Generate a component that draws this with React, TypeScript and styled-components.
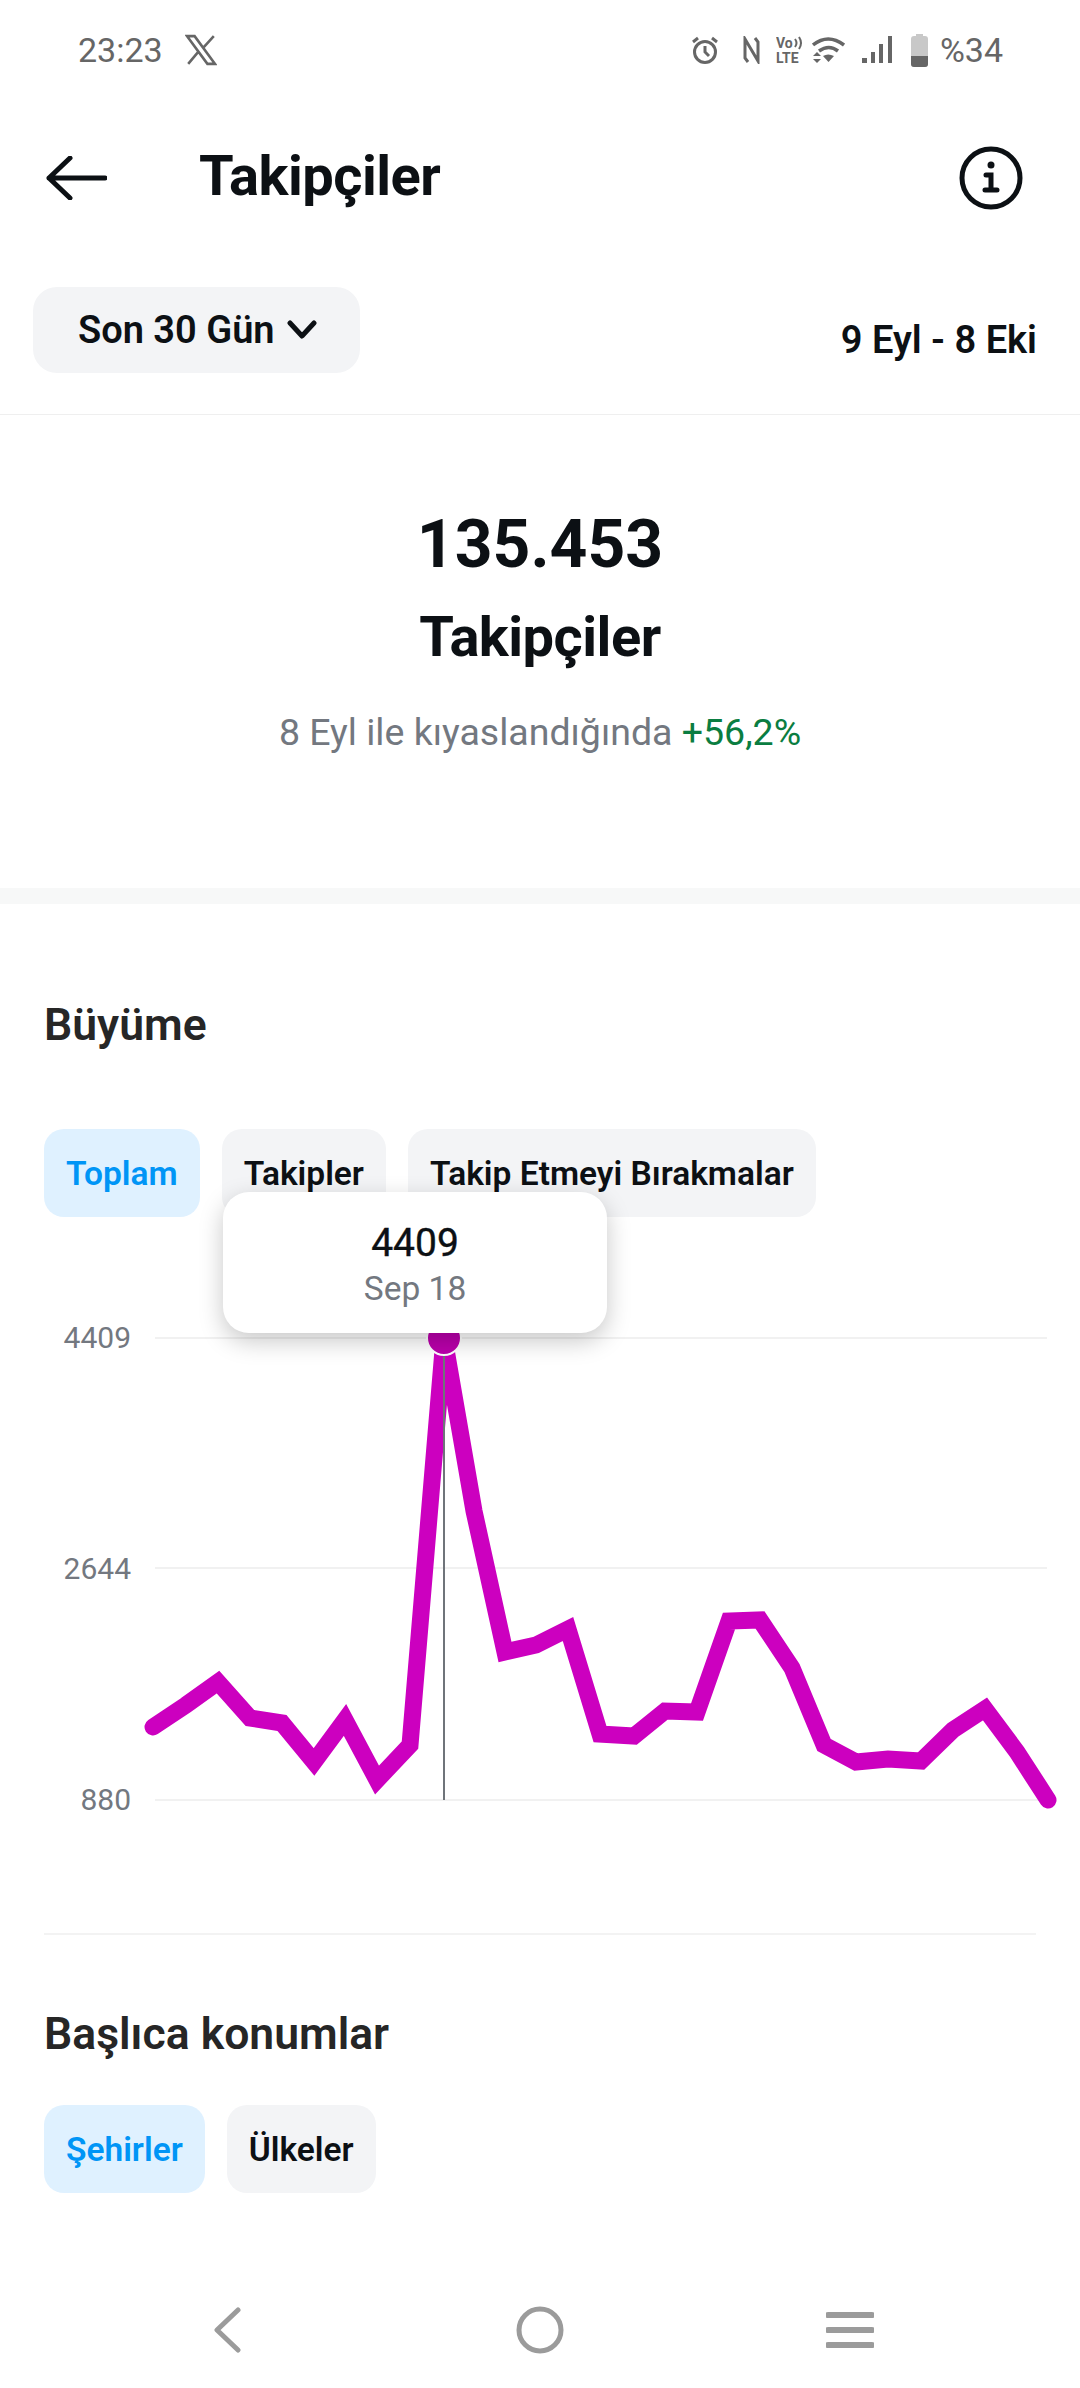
import React from 'react';
import styled, { createGlobalStyle } from 'styled-components';

const GlobalStyle = createGlobalStyle`
  html, body {
    margin: 0;
    padding: 0;
    background: #fff;
    font-family: Roboto, "Noto Sans", sans-serif;
  }
`;

const Page = styled.div`
  width: 1080px;
  height: 2388px;
  display: flex;
  flex-direction: column;
  overflow: hidden;
  background: #fff;
  color: #0c1014;
`;

const StatusBar = styled.div`
  height: 100px;
  padding: 0 77px 0 78px;
  box-sizing: border-box;
  display: flex;
  align-items: center;
  color: #666;
  font-size: 34px;
`;

const StatusIcon = styled.svg<{ $ml?: number }>`
  display: block;
  flex: none;
  margin-left: ${p => p.$ml ?? 0}px;
`;

const StatusSpacer = styled.div`
  flex: 1;
`;

const BatteryText = styled.span`
  margin-left: 12px;
`;

const Header = styled.header`
  height: 156px;
  padding: 0 57px 0 46px;
  display: flex;
  align-items: center;
  box-sizing: border-box;
`;

const PageTitle = styled.h1`
  margin: 0 0 4px 92px;
  flex: 1;
  font-size: 56px;
  font-weight: 700;
  letter-spacing: -0.5px;
`;

const FilterRow = styled.div`
  padding: 31px 43px 41px 33px;
  display: flex;
  justify-content: space-between;
  align-items: flex-start;
  border-bottom: 1px solid #efefef;
`;

const RangeButton = styled.div`
  width: 327px;
  height: 86px;
  padding-left: 45px;
  box-sizing: border-box;
  display: flex;
  align-items: center;
  gap: 12px;
  border-radius: 24px;
  background: #f3f4f6;
  font-size: 38px;
  font-weight: 600;
`;

const DateRange = styled.div`
  margin-top: 30px;
  font-size: 38px;
  font-weight: 600;
  line-height: 46px;
`;

const Summary = styled.section`
  height: 473px;
  padding-top: 98px;
  box-sizing: border-box;
  display: flex;
  flex-direction: column;
  align-items: center;
`;

const BigNumber = styled.div`
  font-size: 66px;
  font-weight: 700;
  line-height: 64px;
`;

const SummaryLabel = styled.div`
  margin-top: 28px;
  font-size: 56px;
  font-weight: 700;
  line-height: 64px;
  letter-spacing: -0.5px;
`;

const Compare = styled.div`
  margin-top: 41px;
  font-size: 37.5px;
  line-height: 44px;
  color: #737880;
`;

const Growth = styled.span`
  color: #0a7d41;
`;

const ThickDivider = styled.div`
  height: 16px;
  background: #f7f8f8;
`;

const Section = styled.section`
  padding: 0 44px;
`;

const SectionTitle = styled.h2<{ $top: number }>`
  margin: ${p => p.$top}px 0 0;
  font-size: 44.5px;
  font-weight: 600;
  line-height: 52px;
  color: #262626;
`;

const Pills = styled.div<{ $top: number }>`
  margin-top: ${p => p.$top}px;
  display: flex;
  gap: 22px;
`;

const Pill = styled.div<{ $active?: boolean }>`
  height: 88px;
  padding: 0 22px;
  display: flex;
  align-items: center;
  border-radius: 20px;
  font-size: 33.5px;
  font-weight: 600;
  background: ${p => (p.$active ? '#dff1ff' : '#f3f4f6')};
  color: ${p => (p.$active ? '#0095f6' : '#0c1014')};
`;

const Chart = styled.div`
  position: relative;
  margin: 103px 0 0;
  display: grid;
  grid-template-columns: 155px 925px;
  height: 500px;
`;

const YAxis = styled.div`
  padding: 1px 24px 3px 0;
  box-sizing: border-box;
  display: flex;
  flex-direction: column;
  justify-content: space-between;
  align-items: flex-end;
  font-size: 30px;
  line-height: 34px;
  color: #737880;
`;

const Plot = styled.svg`
  display: block;
  overflow: visible;
`;

const Tooltip = styled.div`
  position: absolute;
  left: 223px;
  top: -128px;
  width: 384px;
  height: 141px;
  box-sizing: border-box;
  padding-top: 28px;
  display: flex;
  flex-direction: column;
  align-items: center;
  border-radius: 26px;
  background: #fff;
  box-shadow: 0 8px 24px rgba(0, 0, 0, 0.22);
`;

const TooltipValue = styled.div`
  font-size: 39px;
  line-height: 46px;
  font-weight: 400;
  -webkit-text-stroke: 0.4px #0c1014;
`;

const TooltipDate = styled.div`
  margin-top: 1px;
  font-size: 33.5px;
  line-height: 44px;
  color: #737880;
`;

const ThinDivider = styled.div`
  margin: 113px 44px 0;
  height: 2px;
  background: #f3f3f3;
`;

const NavBar = styled.nav`
  margin-top: auto;
  height: 116px;
  padding: 0 0 0 212px;
  display: flex;
  align-items: center;
  box-sizing: border-box;
`;

const NavIcon = styled.svg<{ $ml?: number }>`
  display: block;
  margin-left: ${p => p.$ml ?? 0}px;
  stroke: #9b9b9b;
  fill: none;
`;

const points: [number, number][] = [
  [153, 1727], [186, 1705], [218, 1682], [250, 1718], [282, 1723], [314, 1762], [345, 1720], [377, 1780],
  [410, 1745], [444, 1338], [474, 1511], [505, 1652], [536, 1645], [568, 1629], [600, 1734], [634, 1736],
  [665, 1711], [697, 1712], [729, 1621], [760, 1620], [792, 1668], [824, 1745], [856, 1762], [888, 1759],
  [921, 1761], [953, 1730], [985, 1709], [1017, 1752], [1048, 1800],
];

const gridLines = [1338, 1568, 1800];

function App() {
  return (
    <Page>
      <GlobalStyle />
      <StatusBar>
        <span>23:23</span>
        <StatusIcon $ml={22} width="32" height="32" viewBox="0 0 30 30" fill="none" stroke="#666" strokeWidth="2.4">
          <path d="M2 2h7l19 26h-7zM27 2L17 13M3 28l10-12" />
        </StatusIcon>
        <StatusSpacer />
        <StatusIcon width="28" height="28" viewBox="0 0 28 28" fill="none" stroke="#666" strokeWidth="3">
          <circle cx="14" cy="16" r="10.5" />
          <path d="M14 10v6l4 4M2 6l5-4M26 6l-5-4" />
        </StatusIcon>
        <StatusIcon $ml={24} width="17" height="28" viewBox="0 0 17 28" fill="none" stroke="#666" strokeWidth="3">
          <path d="M5 26L2 22V3L15 25V6L12 2" />
        </StatusIcon>
        <StatusIcon $ml={16} width="27" height="36" viewBox="0 -4 27 36">
          <text x="0" y="12" fontSize="14" fontWeight="700" fontFamily="Roboto" fill="#666">Vo</text>
          <path d="M19 3q3 4 0 8M23 1q4 6 0 12" fill="none" stroke="#666" strokeWidth="2" />
          <text x="0" y="27" fontSize="14" fontWeight="700" fontFamily="Roboto" fill="#666">LTE</text>
        </StatusIcon>
        <StatusIcon $ml={9} width="33" height="28" viewBox="0 0 33 28" fill="none" stroke="#666" strokeWidth="3.5">
          <path d="M1 9q15-12 31 0M7 15q10-7 19 0" />
          <path d="M11 20q5-3 11 0l-5.500 6z" fill="#666" stroke="none" />
          <path d="M1 20l4-4 4 4zM1 23h8l-4 4z" fill="#666" stroke="none" />
        </StatusIcon>
        <StatusIcon $ml={17} width="31" height="28" viewBox="0 0 31 28" fill="#666">
          <rect x="0" y="22" width="5" height="5" />
          <rect x="9" y="16" width="4" height="11" />
          <rect x="17" y="8" width="4" height="19" />
          <rect x="26" y="0" width="4" height="27" />
        </StatusIcon>
        <StatusIcon $ml={18} width="17" height="33" viewBox="0 0 17 33">
          <path d="M5 0h7v2h2q3 0 3 3v25q0 3-3 3H3q-3 0-3-3V5q0-3 3-3h2z" fill="#c8c8c8" />
          <path d="M0 22h17v8q0 3-3 3H3q-3 0-3-3z" fill="#666" />
        </StatusIcon>
        <BatteryText>%34</BatteryText>
      </StatusBar>

      <Header>
        <svg width="61" height="44" viewBox="0 0 61 44" fill="none" stroke="#0c1014" strokeWidth="5" strokeLinecap="round" strokeLinejoin="round">
          <path d="M3 22h56M24 2L3 22l21 20" />
        </svg>
        <PageTitle>Takipçiler</PageTitle>
        <svg width="64" height="64" viewBox="0 0 64 64" fill="none" stroke="#0c1014" strokeWidth="5" strokeLinecap="round">
          <circle cx="32" cy="32" r="29" />
          <path d="M27 29h5v15M26 44h12" strokeWidth="5" />
          <circle cx="32" cy="19" r="3.500" fill="#0c1014" stroke="none" />
        </svg>
      </Header>

      <FilterRow>
        <RangeButton>
          Son 30 Gün
          <svg width="30" height="20" viewBox="0 0 30 20" fill="none" stroke="#0c1014" strokeWidth="5" strokeLinecap="round" strokeLinejoin="round">
            <path d="M3 3l12 13L27 3" />
          </svg>
        </RangeButton>
        <DateRange>9 Eyl - 8 Eki</DateRange>
      </FilterRow>

      <Summary>
        <BigNumber>135.453</BigNumber>
        <SummaryLabel>Takipçiler</SummaryLabel>
        <Compare>
          8 Eyl ile kıyaslandığında <Growth>+56,2%</Growth>
        </Compare>
      </Summary>

      <ThickDivider />

      <Section>
        <SectionTitle $top={95}>Büyüme</SectionTitle>
        <Pills $top={78}>
          <Pill $active>Toplam</Pill>
          <Pill>Takipler</Pill>
          <Pill>Takip Etmeyi Bırakmalar</Pill>
        </Pills>
      </Section>

      <Chart>
        <YAxis>
          <span>4409</span>
          <span>2644</span>
          <span>880</span>
        </YAxis>
        <Plot width="925" height="500" viewBox="155 1320 925 500">
          {gridLines.map(y => (
            <line key={y} x1="155" x2="1047" y1={y} y2={y} stroke="#f1f1f1" strokeWidth="2" />
          ))}
          <polyline
            points={points.map(p => p.join(',')).join(' ')}
            fill="none"
            stroke="#cc00bf"
            strokeWidth="17"
            strokeLinejoin="miter"
            strokeMiterlimit="8"
            strokeLinecap="round"
          />
          <line x1="444" x2="444" y1="1338" y2="1800" stroke="#6f747a" strokeWidth="2" />
          <circle cx="444" cy="1338" r="17" fill="#bb00ac" stroke="#fff" strokeWidth="2" />
        </Plot>
        <Tooltip>
          <TooltipValue>4409</TooltipValue>
          <TooltipDate>Sep 18</TooltipDate>
        </Tooltip>
      </Chart>

      <ThinDivider />

      <Section>
        <SectionTitle $top={73}>Başlıca konumlar</SectionTitle>
        <Pills $top={45}>
          <Pill $active>Şehirler</Pill>
          <Pill>Ülkeler</Pill>
        </Pills>
      </Section>

      <NavBar>
        <NavIcon width="32" height="46" viewBox="0 0 32 46" strokeWidth="5" strokeLinecap="round" strokeLinejoin="round">
          <path d="M26 3L5 23l21 20" />
        </NavIcon>
        <NavIcon $ml={272} width="48" height="48" viewBox="0 0 48 48" strokeWidth="5">
          <circle cx="24" cy="24" r="21" />
        </NavIcon>
        <NavIcon $ml={262} width="48" height="40" viewBox="0 0 48 40" strokeWidth="6">
          <path d="M2 5h44M2 20h44M2 35h44" strokeLinecap="round" />
        </NavIcon>
      </NavBar>
    </Page>
  );
}

export default App;
